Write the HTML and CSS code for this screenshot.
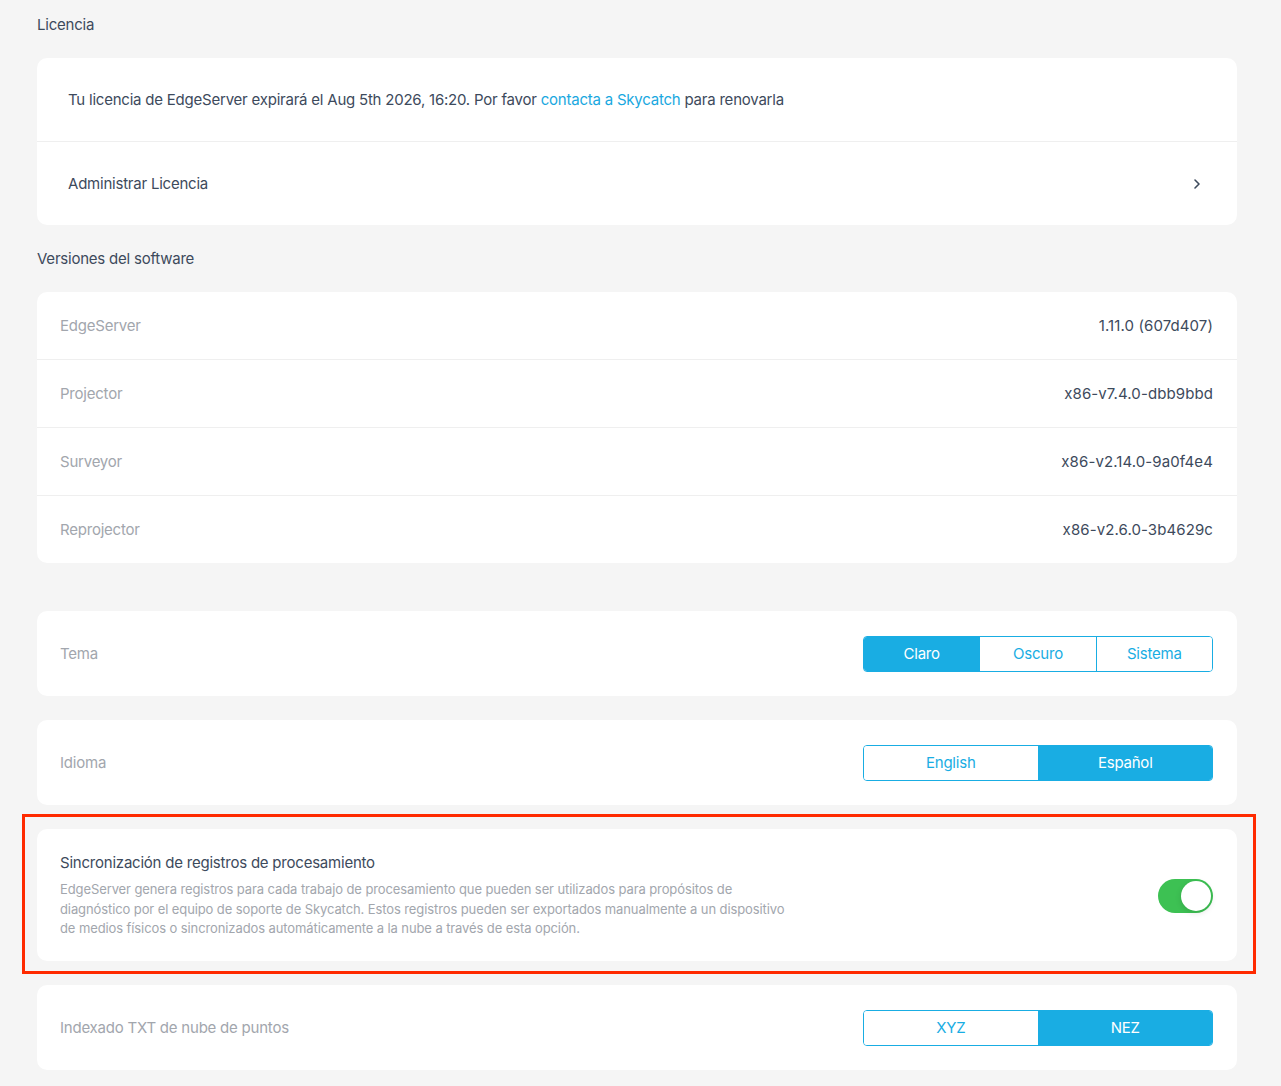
FILE: index.html
```html
<!DOCTYPE html>
<html lang="es">
<head>
  <meta charset="UTF-8">
  <meta name="viewport" content="width=device-width, initial-scale=1.0">
  <title>Configuración</title>
  <link rel="stylesheet" href="styles.css">
</head>
<body>
  <div class="settings">
    <h2 class="section-title">Licencia</h2>
    <div class="card">
      <div class="license-row">
        <p>Tu licencia de EdgeServer expirará el Aug 5th 2026, 16:20. Por favor <a href="#">contacta a Skycatch</a> para renovarla</p>
      </div>
      <div class="license-row link-row">
        <span>Administrar Licencia</span>
        <svg class="chevron" width="8" height="12" viewBox="0 0 8 12" fill="none">
          <path d="M2 2l4 4-4 4" stroke="#3d4a5c" stroke-width="1.6" stroke-linecap="round" stroke-linejoin="round"/>
        </svg>
      </div>
    </div>

    <h2 class="section-title">Versiones del software</h2>
    <div class="card">
      <div class="version-row"><span class="label">EdgeServer</span><span class="value">1.11.0 (607d407)</span></div>
      <div class="version-row"><span class="label">Projector</span><span class="value">x86-v7.4.0-dbb9bbd</span></div>
      <div class="version-row"><span class="label">Surveyor</span><span class="value">x86-v2.14.0-9a0f4e4</span></div>
      <div class="version-row"><span class="label">Reprojector</span><span class="value">x86-v2.6.0-3b4629c</span></div>
    </div>

    <div class="options">
      <div class="card option">
        <span class="label">Tema</span>
        <div class="segmented">
          <button class="active">Claro</button>
          <button>Oscuro</button>
          <button>Sistema</button>
        </div>
      </div>

      <div class="card option">
        <span class="label">Idioma</span>
        <div class="segmented">
          <button>English</button>
          <button class="active">Español</button>
        </div>
      </div>

      <div class="highlight">
        <div class="card option sync">
          <div class="sync-text">
            <div class="sync-title">Sincronización de registros de procesamiento</div>
            <p>EdgeServer genera registros para cada trabajo de procesamiento que pueden ser utilizados para propósitos de diagnóstico por el equipo de soporte de Skycatch. Estos registros pueden ser exportados manualmente a un dispositivo de medios físicos o sincronizados automáticamente a la nube a través de esta opción.</p>
          </div>
          <label class="toggle">
            <input type="checkbox" checked>
            <span class="knob"></span>
          </label>
        </div>
      </div>

      <div class="card option">
        <span class="label">Indexado TXT de nube de puntos</span>
        <div class="segmented">
          <button>XYZ</button>
          <button class="active">NEZ</button>
        </div>
      </div>
    </div>
  </div>
</body>
</html>
```

FILE: styles.css
```css
body {
  margin: 0;
  padding: 0;
  font-family: Inter, "Noto Sans", sans-serif;
  letter-spacing: -0.22px;
  background-color: #f5f5f5;
  color: #3d4a5c;
}

.settings {
  width: 1200px;
  padding: 13px 0 16px 37px;
}

.section-title {
  margin: 0;
  font-size: 15px;
  font-weight: 400;
  line-height: 24px;
  color: #3d4a5c;
  padding-bottom: 21px;
}

.card {
  background-color: #ffffff;
  border-radius: 10px;
  margin-bottom: 22px;
}

.license-row {
  height: 83px;
  display: flex;
  align-items: center;
  padding: 0 32px 0 31px;
  font-size: 15px;
}

.license-row p {
  margin: 0;
}

.license-row + .license-row {
  border-top: 1px solid #efefef;
}

.license-row a {
  color: #1aa8e0;
  text-decoration: none;
}

.link-row {
  justify-content: space-between;
  padding-right: 36px;
}

.version-row {
  height: 67px;
  display: flex;
  align-items: center;
  justify-content: space-between;
  padding: 0 24px 0 23px;
  font-size: 15px;
}

.version-row + .version-row {
  border-top: 1px solid #efefef;
}

.label {
  color: #a2a6ad;
  font-size: 15px;
}

.value {
  color: #3d4a5c;
  letter-spacing: 0.1px;
}

.options {
  display: flex;
  flex-direction: column;
  gap: 24px;
  padding-top: 26px;
}

.options .card {
  margin-bottom: 0;
}

.option {
  height: 85px;
  display: flex;
  align-items: center;
  justify-content: space-between;
  padding: 0 24px 0 23px;
  box-sizing: border-box;
}

.segmented {
  display: flex;
  width: 350px;
  height: 36px;
  border: 1px solid #19ade3;
  border-radius: 4px;
  overflow: hidden;
  box-sizing: border-box;
}

.segmented button {
  flex: 1;
  border: none;
  background: #ffffff;
  color: #19ade3;
  font-family: Inter, "Noto Sans", sans-serif;
  font-size: 15px;
  letter-spacing: -0.22px;
  padding: 0;
  cursor: pointer;
}

.segmented button + button {
  border-left: 1px solid #19ade3;
}

.segmented button.active {
  background-color: #19ade3;
  color: #ffffff;
}

.highlight {
  border: 3px solid #ff2a00;
  margin: -15px -19px -13px -15px;
  padding: 12px 16px 10px 12px;
}

.sync {
  height: 132px;
  padding-top: 2px;
}

.sync-title {
  font-size: 15px;
  color: #3d4a5c;
  margin-bottom: 8px;
}

.sync-text p {
  margin: 0;
  max-width: 728px;
  font-size: 13px;
  line-height: 19.5px;
  letter-spacing: -0.1px;
  color: #a2a6ad;
}

.toggle {
  position: relative;
  width: 55px;
  height: 34px;
}

.toggle input {
  display: none;
}

.toggle .knob {
  position: absolute;
  inset: 0;
  background-color: #3dc153;
  border-radius: 17px;
}

.toggle .knob::after {
  content: "";
  position: absolute;
  top: 2px;
  right: 2px;
  width: 30px;
  height: 30px;
  border-radius: 50%;
  background: #ffffff;
  box-shadow: 0 2px 6px rgba(0, 0, 0, 0.12);
}
```
